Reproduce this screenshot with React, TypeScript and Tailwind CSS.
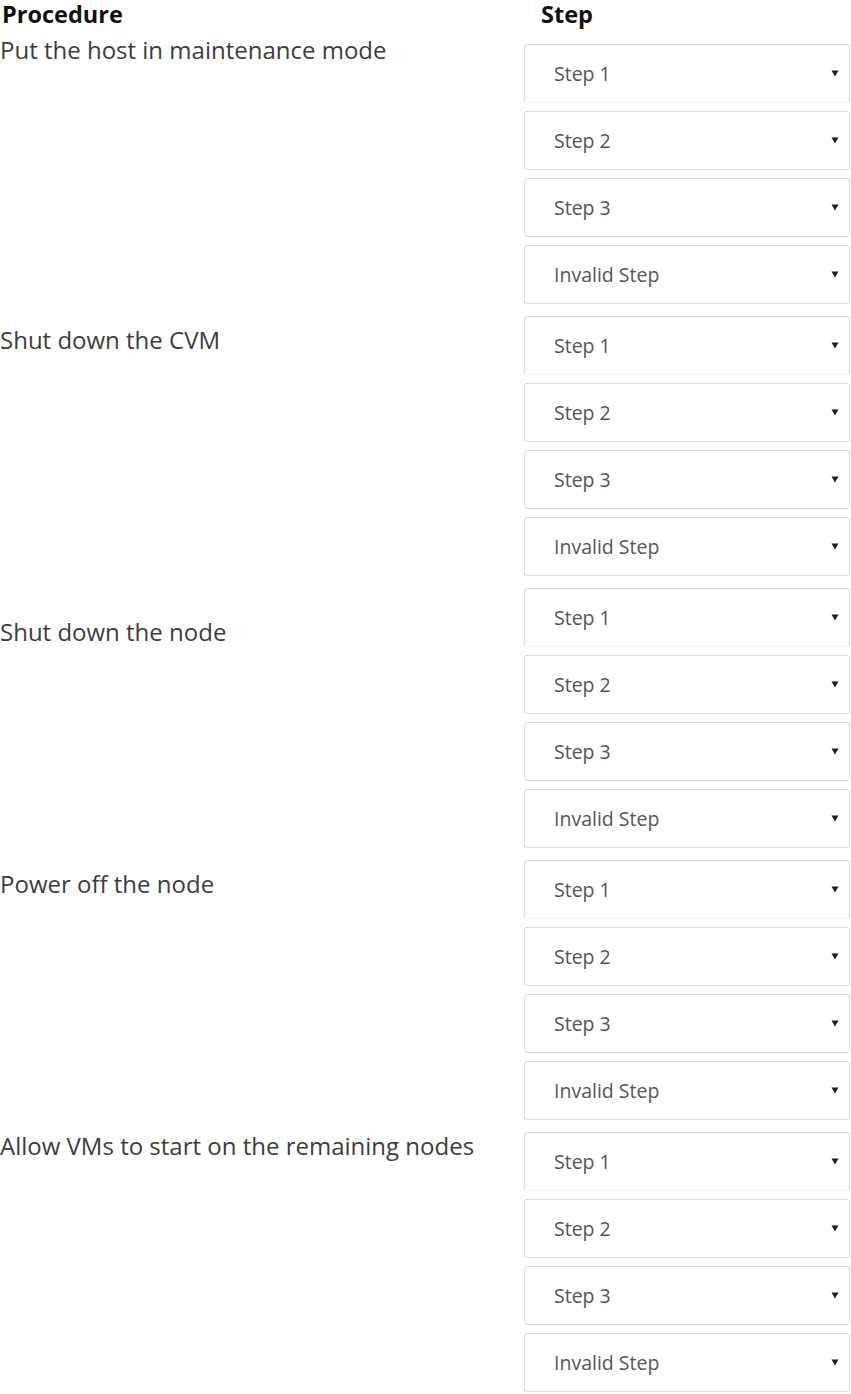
import React from 'react';

type Group = {
  label: string;
  offset: string;
};

const groups: Group[] = [
  { label: 'Put the host in maintenance mode', offset: 'pt-[2px]' },
  { label: 'Shut down the CVM', offset: 'pt-[20px]' },
  { label: 'Shut down the node', offset: 'pt-[40px]' },
  { label: 'Power off the node', offset: 'pt-[20px]' },
  { label: 'Allow VMs to start on the remaining nodes', offset: 'pt-[10px]' },
];

const options = ['Step 1', 'Step 2', 'Step 3', 'Invalid Step'];

function Caret() {
  return (
    <svg width="8" height="7" viewBox="0 0 8 7" className="shrink-0">
      <path d="M0.5 0.5 L7.5 0.5 L4 6.5 Z" fill="#1f1f1f" />
    </svg>
  );
}

function StepSelect({ value, first }: { value: string; first: boolean }) {
  return (
    <div
      className={`h-[59px] w-[326px] flex items-center justify-between pl-[29px] pr-[10px] bg-white rounded-[3px] border border-[#dcdcdc] ${
        first ? 'border-b-[#f2f2f2]' : ''
      }`}
    >
      <span className="text-[19.5px] text-[#555]">{value}</span>
      <Caret />
    </div>
  );
}

export default function App() {
  return (
    <div
      className="w-[851px] min-h-[1394px] bg-white text-[#3d3d3d]"
      style={{ fontFamily: '"Open Sans", "Noto Sans", sans-serif' }}
    >
      {/* Header */}
      <div className="flex h-[28px] items-center">
        <div className="w-[541px] pl-[2px] text-[23.5px] font-bold text-[#111] leading-[28px]">Procedure</div>
        <div className="text-[23.5px] font-bold text-[#111] leading-[28px]">Step</div>
      </div>

      {/* Groups */}
      <div className="flex flex-col gap-[12px] pt-[16px]">
        {groups.map((g) => (
          <div key={g.label} className="flex">
            <div className={`w-[524px] ${g.offset}`}>
              <div className="text-[24px] leading-[28px] -mt-[10px]">{g.label}</div>
            </div>
            <div className="flex flex-col gap-[8px]">
              {options.map((o, i) => (
                <StepSelect key={o} value={o} first={i === 0} />
              ))}
            </div>
          </div>
        ))}
      </div>
    </div>
  );
}
